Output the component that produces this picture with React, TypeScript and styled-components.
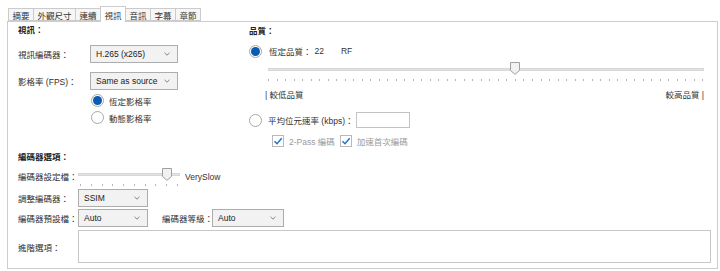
import React from 'react';
import styled, { createGlobalStyle } from 'styled-components';

const GlobalStyle = createGlobalStyle`
  body {
    margin: 0;
    background: #fff;
    font-family: "Liberation Sans", "Noto Sans CJK TC", sans-serif;
    font-size: 8.5px;
    color: #2e2e2e;
  }
  * { box-sizing: border-box; }
`;

const Page = styled.div`
  padding: 6px 0 0 7px;
  width: 718px;
`;

const TabBar = styled.div`
  display: flex;
  align-items: flex-end;
  height: 15px;
  padding-left: 1px;
`;

const Tab = styled.div<{ $active?: boolean }>`
  height: ${p => (p.$active ? '16px' : '13px')};
  margin-bottom: ${p => (p.$active ? '-1px' : '0')};
  margin-left: -1px;
  padding: 0 3.5px;
  display: flex;
  align-items: center;
  border: 1px solid #cbcbcb;
  border-bottom: ${p => (p.$active ? 'none' : '1px solid #cbcbcb')};
  background: ${p => (p.$active ? '#fff' : '#f6f6f6')};
  position: relative;
  z-index: ${p => (p.$active ? 2 : 1)};
  color: #333;
  &:first-child { margin-left: 0; }
`;

const Panel = styled.div`
  width: 711px;
  height: 248px;
  border: 1px solid #cdcdcd;
  background: #fff;
`;

const TopGrid = styled.div`
  display: grid;
  grid-template-columns: 241px 1fr;
`;

const Column = styled.div<{ $pad?: number }>`
  display: flex;
  flex-direction: column;
  padding-left: ${p => p.$pad ?? 0}px;
`;

const SectionTitle = styled.div<{ $mt: number }>`
  font-weight: 700;
  height: 14px;
  line-height: 14px;
  margin-top: ${p => p.$mt}px;
  color: #222;
`;

const Row = styled.div<{ $mt: number; $h?: number; $align?: string }>`
  display: flex;
  align-items: ${p => p.$align ?? 'center'};
  margin-top: ${p => p.$mt}px;
  height: ${p => (p.$h ? `${p.$h}px` : 'auto')};
`;

const Label = styled.div<{ $w: number; $lh?: number }>`
  width: ${p => p.$w}px;
  flex: none;
  white-space: nowrap;
  line-height: ${p => (p.$lh ? `${p.$lh}px` : 'normal')};
`;

const SelectBox = styled.div<{ $w: number }>`
  width: ${p => p.$w}px;
  height: 18px;
  border: 1px solid #adadad;
  background: #f2f2f2;
  display: flex;
  align-items: center;
  justify-content: space-between;
  padding: 0 7px 0 5px;
  color: #222;
`;

const Chevron = () => (
  <svg width="6" height="4" viewBox="0 0 6 4">
    <path d="M0.5 0.8 L3 3.2 L5.5 0.8" fill="none" stroke="#777" strokeWidth="0.9" />
  </svg>
);

const Select = ({ value, width }: { value: string; width: number }) => (
  <SelectBox $w={width}>
    <span>{value}</span>
    <Chevron />
  </SelectBox>
);

const RadioCircle = styled.div<{ $checked?: boolean }>`
  width: 13px;
  height: 13px;
  flex: none;
  border-radius: 50%;
  border: 1px solid #a8a8a8;
  background: #fff;
  display: flex;
  align-items: center;
  justify-content: center;
  &::after {
    content: '';
    width: 9px;
    height: 9px;
    border-radius: 50%;
    background: ${p => (p.$checked ? '#0a5bb4' : 'transparent')};
  }
`;

const RadioRow = styled.div<{ $mt?: number; $h: number }>`
  display: flex;
  align-items: center;
  height: ${p => p.$h}px;
  margin-top: ${p => p.$mt ?? 0}px;
`;

const FpsRadios = styled.div`
  display: flex;
  flex-direction: column;
  margin: 2px 0 0 73px;
`;

const CheckBox = styled.div`
  width: 12px;
  height: 12px;
  flex: none;
  border: 1px solid #b9b9b9;
  background: #fff;
  display: flex;
  align-items: center;
  justify-content: center;
`;

const CheckItem = styled.div<{ $ml: number }>`
  display: flex;
  align-items: center;
  gap: 5px;
  margin-left: ${p => p.$ml}px;
  color: #9b9b9b;
`;

const Check = () => (
  <CheckBox>
    <svg width="10" height="10" viewBox="0 0 10 10">
      <path d="M1.5 5.2 L4 7.7 L8.7 2.2" fill="none" stroke="#1e74cc" strokeWidth="1.5" />
    </svg>
  </CheckBox>
);

const SliderWrap = styled.div<{ $w: number; $h: number; $ml: number; $mt: number }>`
  position: relative;
  width: ${p => p.$w}px;
  height: ${p => p.$h}px;
  margin-left: ${p => p.$ml}px;
  margin-top: ${p => p.$mt}px;
  flex: none;
`;

const Track = styled.div<{ $top: number }>`
  position: absolute;
  left: 0;
  right: 0;
  top: ${p => p.$top}px;
  height: 3px;
  background: #e3e3e3;
  border: 1px solid #d7d7d7;
`;

const Ticks = styled.div<{ $top: number; $inset: number }>`
  position: absolute;
  left: ${p => p.$inset}px;
  right: ${p => p.$inset}px;
  top: ${p => p.$top}px;
  display: flex;
  justify-content: space-between;
`;

const Tick = styled.span`
  width: 1px;
  height: 2px;
  background: #b5b5b5;
`;

const Thumb = styled.svg`
  position: absolute;
  top: 0;
  margin-left: -5px;
`;

interface SliderProps {
  width: number;
  height: number;
  ml: number;
  mt: number;
  trackTop: number;
  tickTop: number;
  ticks: number;
  inset: number;
  thumbX: number;
}

const Slider = ({ width, height, ml, mt, trackTop, tickTop, ticks, inset, thumbX }: SliderProps) => (
  <SliderWrap $w={width} $h={height} $ml={ml} $mt={mt}>
    <Track $top={trackTop} />
    <Ticks $top={tickTop} $inset={inset}>
      {Array.from({ length: ticks }).map((_, i) => (
        <Tick key={i} />
      ))}
    </Ticks>
    <Thumb width="10" height="13" viewBox="0 0 10 13" style={{ left: thumbX }}>
      <path d="M0.5 0.5 H9.5 V8.5 L5 12.3 L0.5 8.5 Z" fill="#f1f1f1" stroke="#a0a0a0" />
    </Thumb>
  </SliderWrap>
);

const QualityScale = styled.div`
  display: flex;
  justify-content: space-between;
  width: 439px;
  margin: 4px 0 0 16px;
  height: 14px;
  line-height: 14px;
  color: #333;
`;

const TextInput = styled.div`
  width: 54px;
  height: 16px;
  border: 1px solid #c3c3c3;
  background: #fff;
  margin-left: 3px;
`;

const Bottom = styled.div`
  padding: 0 5px 0 10px;
  display: flex;
  flex-direction: column;
`;

const TextArea = styled.div`
  width: 633px;
  height: 33px;
  border: 1px solid #c8c8c8;
  background: #fff;
`;

const Text = styled.span<{ $ml: number }>`
  margin-left: ${p => p.$ml}px;
  color: #333;
  white-space: nowrap;
`;

const SlowLabel = styled(Text)`
  line-height: 18px;
`;

const tabs = ['摘要', '外觀尺寸', '連續', '視訊', '音訊', '字幕', '章節'];

export default function App() {
  return (
    <Page>
      <GlobalStyle />
      <TabBar>
        {tabs.map(t => (
          <Tab key={t} $active={t === '視訊'}>{t}</Tab>
        ))}
      </TabBar>
      <Panel>
        <TopGrid>
          <Column $pad={10}>
            <SectionTitle $mt={1}>視訊：</SectionTitle>
            <Row $mt={8}>
              <Label $w={72}>視訊編碼器：</Label>
              <Select value="H.265 (x265)" width={88} />
            </Row>
            <Row $mt={9}>
              <Label $w={72}>影格率 (FPS)：</Label>
              <Select value="Same as source" width={88} />
            </Row>
            <FpsRadios>
              <RadioRow $h={17}>
                <RadioCircle $checked />
                <Text $ml={5}>恆定影格率</Text>
              </RadioRow>
              <RadioRow $h={17}>
                <RadioCircle />
                <Text $ml={5}>動態影格率</Text>
              </RadioRow>
            </FpsRadios>
          </Column>
          <Column>
            <SectionTitle $mt={2}>品質：</SectionTitle>
            <RadioRow $mt={6} $h={14}>
              <RadioCircle $checked />
              <Text $ml={7}>恆定品質：</Text>
              <Text $ml={3}>22</Text>
              <Text $ml={17}>RF</Text>
            </RadioRow>
            <Slider width={436} height={22} ml={19} mt={4} trackTop={6} tickTop={17} ticks={52} inset={0} thumbX={247} />
            <QualityScale>
              <span>| 較低品質</span>
              <span>較高品質 |</span>
            </QualityScale>
            <RadioRow $mt={10} $h={16}>
              <RadioCircle />
              <Text $ml={6}>平均位元速率 (kbps)：</Text>
              <TextInput />
            </RadioRow>
            <Row $mt={6} $h={13}>
              <CheckItem $ml={23}>
                <Check />
                <span>2-Pass 編碼</span>
              </CheckItem>
              <CheckItem $ml={5}>
                <Check />
                <span>加速首次編碼</span>
              </CheckItem>
            </Row>
          </Column>
        </TopGrid>
        <Bottom>
          <SectionTitle $mt={3}>編碼器選項：</SectionTitle>
          <Row $mt={4} $h={18} $align="flex-start">
            <Label $w={60} $lh={18}>編碼器設定檔：</Label>
            <Slider width={102} height={18} ml={0} mt={0} trackTop={5} tickTop={16} ticks={10} inset={2} thumbX={89} />
            <SlowLabel $ml={5}>VerySlow</SlowLabel>
          </Row>
          <Row $mt={3}>
            <Label $w={60}>調整編碼器：</Label>
            <Select value="SSIM" width={70} />
          </Row>
          <Row $mt={2}>
            <Label $w={60}>編碼器預設檔：</Label>
            <Select value="Auto" width={70} />
            <Label $w={50} style={{ marginLeft: 14 }}>編碼器等級：</Label>
            <Select value="Auto" width={72} />
          </Row>
          <Row $mt={3}>
            <Label $w={60}>進階選項：</Label>
            <TextArea />
          </Row>
        </Bottom>
      </Panel>
    </Page>
  );
}
